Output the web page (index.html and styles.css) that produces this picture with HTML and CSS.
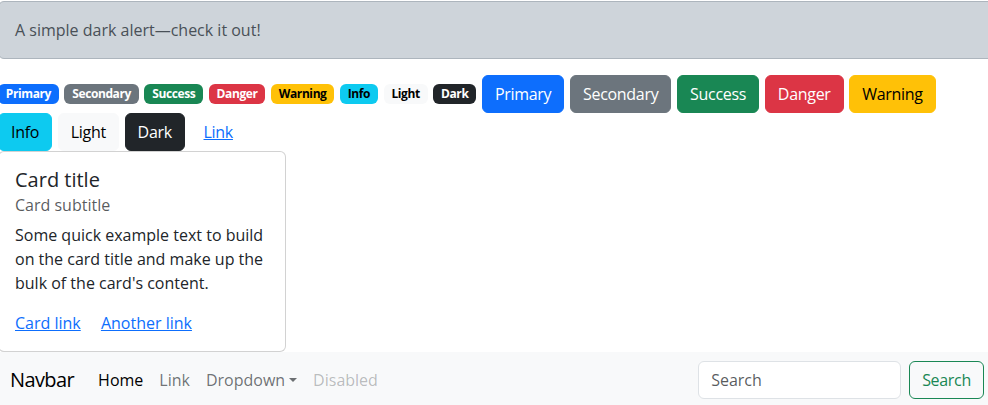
FILE: index.html
```html
<!DOCTYPE html>
<html lang="en">
<head>
<meta charset="utf-8">
<title>Components</title>
<link rel="stylesheet" href="styles.css">
</head>
<body>
<div class="page">
  <div class="alert">A simple dark alert—check it out!</div>

  <div class="items">
    <span class="badge bg-primary">Primary</span>
    <span class="badge bg-secondary">Secondary</span>
    <span class="badge bg-success">Success</span>
    <span class="badge bg-danger">Danger</span>
    <span class="badge bg-warning">Warning</span>
    <span class="badge bg-info">Info</span>
    <span class="badge bg-light">Light</span>
    <span class="badge bg-dark">Dark</span>
    <button class="btn btn-primary">Primary</button>
    <button class="btn btn-secondary">Secondary</button>
    <button class="btn btn-success">Success</button>
    <button class="btn btn-danger">Danger</button>
    <button class="btn btn-warning">Warning</button>
    <button class="btn btn-info">Info</button>
    <button class="btn btn-light">Light</button>
    <button class="btn btn-dark">Dark</button>
    <button class="btn btn-link">Link</button>
  </div>

  <div class="card">
    <div class="card-body">
      <h5 class="card-title">Card title</h5>
      <h6 class="card-subtitle">Card subtitle</h6>
      <p class="card-text">Some quick example text to build on the card title and make up the bulk of the card's content.</p>
      <a href="#" class="card-link">Card link</a>
      <a href="#" class="card-link">Another link</a>
    </div>
  </div>

  <nav class="navbar">
    <a class="navbar-brand" href="#">Navbar</a>
    <ul class="nav">
      <li><a class="nav-link active" href="#">Home</a></li>
      <li><a class="nav-link" href="#">Link</a></li>
      <li><a class="nav-link dropdown" href="#">Dropdown</a></li>
      <li><span class="nav-link disabled">Disabled</span></li>
    </ul>
    <form class="search">
      <input class="search-input" type="search" placeholder="Search">
      <button class="btn btn-outline-success" type="button">Search</button>
    </form>
  </nav>
</div>
</body>
</html>
```
FILE: styles.css
```css
html, body {
  margin: 0;
  padding: 0;
  overflow: hidden;
  background: #fff;
}

body {
  font-family: "Open Sans", "Noto Sans", sans-serif;
  font-size: 16px;
  line-height: 1.5;
  color: #212529;
}

.page {
  width: 998px;
  margin-left: -2px;
  padding-top: 1px;
}

.alert {
  padding: 16px;
  margin-bottom: 16px;
  border: 1px solid #adb5bd;
  border-radius: 6px;
  background: #ced4da;
  color: #495057;
}

.items {
  display: flex;
  flex-wrap: wrap;
  align-items: center;
  column-gap: 5.7px;
  max-width: 985px;
}

.badge {
  display: inline-block;
  padding: 4.2px 7.8px;
  font-size: 12px;
  font-weight: 700;
  line-height: 1;
  letter-spacing: -0.4px;
  border-radius: 6px;
  color: #fff;
  white-space: nowrap;
}

.bg-primary { background: #0d6efd; }
.bg-secondary { background: #6c757d; }
.bg-success { background: #198754; }
.bg-danger { background: #dc3545; }
.bg-warning { background: #ffc107; color: #000; }
.bg-info { background: #0dcaf0; color: #000; }
.bg-light { background: #f8f9fa; color: #000; }
.bg-dark { background: #212529; }

.btn {
  display: inline-block;
  padding: 6px 12px;
  font-family: inherit;
  font-size: 16px;
  font-weight: 400;
  line-height: 24px;
  letter-spacing: -0.3px;
  border: 1px solid transparent;
  border-radius: 6px;
  background: transparent;
  color: #fff;
  cursor: pointer;
}

.btn-primary { background: #0d6efd; border-color: #0d6efd; }
.btn-secondary { background: #6c757d; border-color: #6c757d; }
.btn-success { background: #198754; border-color: #198754; }
.btn-danger { background: #dc3545; border-color: #dc3545; }
.btn-warning { background: #ffc107; border-color: #ffc107; color: #000; }
.btn-info { background: #0dcaf0; border-color: #0dcaf0; color: #000; }
.btn-light { background: #f8f9fa; border-color: #f8f9fa; color: #000; }
.btn-dark { background: #212529; border-color: #212529; }
.btn-link { color: #0d6efd; text-decoration: underline; }
.btn-outline-success { color: #198754; border-color: #198754; background: transparent; }

.card {
  width: 288px;
  box-sizing: border-box;
  border: 1px solid rgba(0, 0, 0, 0.175);
  border-radius: 6px;
  background: #fff;
}

.card-body {
  padding: 16px;
}

.card-title {
  margin: 0 0 8px;
  font-size: 20px;
  font-weight: 500;
  line-height: 1.2;
}

.card-subtitle {
  margin: -4px 0 8px;
  font-size: 16px;
  font-weight: 400;
  line-height: 1.2;
  color: rgba(33, 37, 41, 0.75);
}

.card-text {
  margin: 0 0 16px;
}

.card-link {
  color: #0d6efd;
  text-decoration: underline;
}

.card-link + .card-link {
  margin-left: 16px;
}

.navbar {
  display: flex;
  align-items: center;
  padding: 8px 12px;
  background: #f8f9fa;
}

.navbar-brand {
  padding: 5px 0;
  margin-right: 16px;
  font-size: 20px;
  letter-spacing: -0.6px;
  color: #000;
  text-decoration: none;
}

.nav {
  display: flex;
  margin: 0;
  padding: 0;
  list-style: none;
}

.nav-link {
  display: block;
  padding: 8px;
  color: rgba(33, 37, 41, 0.65);
  text-decoration: none;
}

.nav-link.active { color: #000; }
.nav-link.disabled { color: rgba(33, 37, 41, 0.3); }

.dropdown::after {
  content: "";
  display: inline-block;
  margin-left: 4px;
  vertical-align: 4px;
  border-top: 4.8px solid;
  border-left: 4.8px solid transparent;
  border-right: 4.8px solid transparent;
}

.search {
  display: flex;
  margin: 0 0 0 auto;
}

.search-input {
  width: 203px;
  box-sizing: border-box;
  margin-right: 8px;
  padding: 6px 12px;
  font-family: inherit;
  font-size: 16px;
  line-height: 24px;
  color: #212529;
  background: #fff;
  border: 1px solid #dee2e6;
  border-radius: 6px;
  outline: none;
}

.search-input::placeholder {
  color: rgba(33, 37, 41, 0.75);
}
```
